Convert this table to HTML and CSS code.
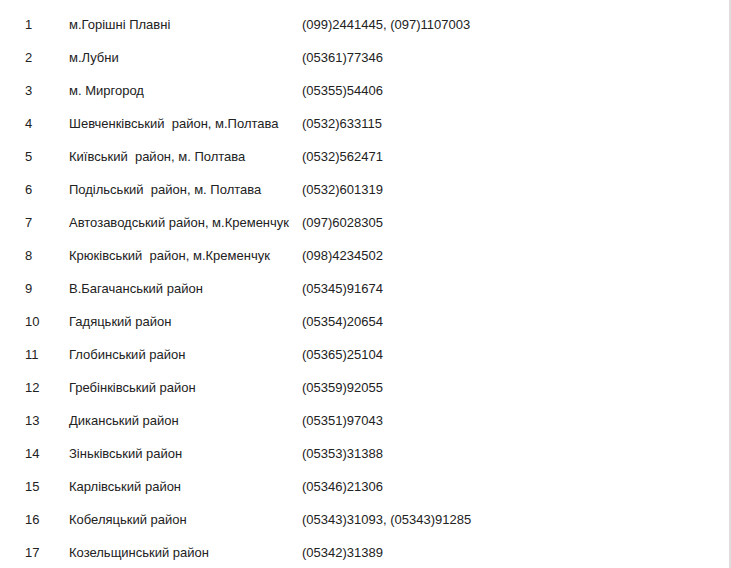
FILE: index.html
```html
<!DOCTYPE html>
<html lang="uk">
<head>
    <meta charset="UTF-8">
    <meta name="viewport" content="width=device-width, initial-scale=1.0">
    <title>Контакти</title>
    <link rel="stylesheet" href="styles.css">
</head>
<body>
    <div class="page">
        <table class="contacts">
            <tbody>
                <tr><td class="num">1</td><td class="place">м.Горішні Плавні</td><td class="phone">(099)2441445, (097)1107003</td></tr>
                <tr><td class="num">2</td><td class="place">м.Лубни</td><td class="phone">(05361)77346</td></tr>
                <tr><td class="num">3</td><td class="place">м. Миргород</td><td class="phone">(05355)54406</td></tr>
                <tr><td class="num">4</td><td class="place">Шевченківський&nbsp; район, м.Полтава</td><td class="phone">(0532)633115</td></tr>
                <tr><td class="num">5</td><td class="place">Київський&nbsp; район, м. Полтава</td><td class="phone">(0532)562471</td></tr>
                <tr><td class="num">6</td><td class="place">Подільський&nbsp; район, м. Полтава</td><td class="phone">(0532)601319</td></tr>
                <tr><td class="num">7</td><td class="place">Автозаводський район, м.Кременчук</td><td class="phone">(097)6028305</td></tr>
                <tr><td class="num">8</td><td class="place">Крюківський&nbsp; район, м.Кременчук</td><td class="phone">(098)4234502</td></tr>
                <tr><td class="num">9</td><td class="place">В.Багачанський район</td><td class="phone">(05345)91674</td></tr>
                <tr><td class="num">10</td><td class="place">Гадяцький район</td><td class="phone">(05354)20654</td></tr>
                <tr><td class="num">11</td><td class="place">Глобинський район</td><td class="phone">(05365)25104</td></tr>
                <tr><td class="num">12</td><td class="place">Гребінківський район</td><td class="phone">(05359)92055</td></tr>
                <tr><td class="num">13</td><td class="place">Диканський район</td><td class="phone">(05351)97043</td></tr>
                <tr><td class="num">14</td><td class="place">Зіньківський район</td><td class="phone">(05353)31388</td></tr>
                <tr><td class="num">15</td><td class="place">Карлівський район</td><td class="phone">(05346)21306</td></tr>
                <tr><td class="num">16</td><td class="place">Кобеляцький район</td><td class="phone">(05343)31093, (05343)91285</td></tr>
                <tr><td class="num">17</td><td class="place">Козельщинський район</td><td class="phone">(05342)31389</td></tr>
            </tbody>
        </table>
    </div>
</body>
</html>
```

FILE: styles.css
```css
* {
    margin: 0;
    padding: 0;
    box-sizing: border-box;
}

html, body {
    height: 100%;
    overflow: hidden;
}

body {
    font-family: Arial, 'Liberation Sans', sans-serif;
    font-size: 13px;
    color: #222;
    background: #fff;
}

.page {
    width: 731px;
    min-height: 100%;
    border-right: 2px solid #dedede;
    padding: 8px 0 0 25px;
}

.contacts {
    border-collapse: collapse;
}

.contacts td {
    padding: 9px 0;
    line-height: 15px;
    vertical-align: top;
    white-space: nowrap;
}

.num {
    width: 44px;
}

.place {
    width: 233px;
}
```
